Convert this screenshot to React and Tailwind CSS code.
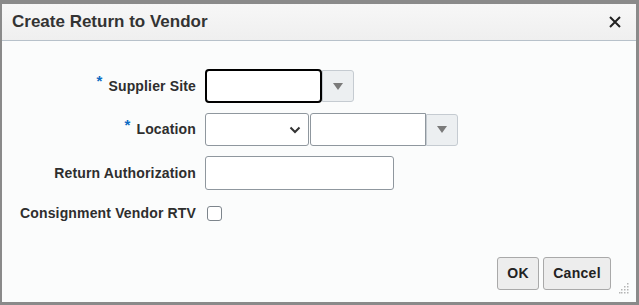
import React from 'react';

const font = { fontFamily: '"Liberation Sans", Arial, sans-serif' };

const Triangle = () => (
    <svg width="10" height="7" viewBox="0 0 10 7">
        <path d="M0 0 L10 0 L5 7 Z" fill="#7a7a7a" />
    </svg>
);

const DropButton = () => (
    <div className="w-[32px] h-[32px] flex items-center justify-center bg-[#eceff1] border border-[#c5cbd1] rounded-r-[3px]">
        <Triangle />
    </div>
);

const Label = ({ required, children }) => (
    <div className="w-[195px] shrink-0 pr-[1px] flex items-center justify-end text-[14px] font-bold tracking-[0.15px] text-[#2e2e2e]">
        {required && <span className="text-[#0b6bc3] text-[15px] mr-[6px] -mt-[9px]">*</span>}
        <span>{children}</span>
    </div>
);

const Grip = () => (
    <svg width="10" height="11" viewBox="0 0 10 11">
        {[[8, 0], [8, 3], [5, 3], [8, 6], [5, 6], [2, 6], [8, 9], [5, 9], [2, 9], [0, 9]].map(([x, y], i) => (
            <rect key={i} x={x} y={y} width="1.5" height="1.5" fill="#b4b4b4" />
        ))}
    </svg>
);

export default function App() {
    return (
        <div style={font} className="w-[639px] h-[305px] border-t-4 border-l-2 border-r-3 border-b-3 border-[#8a8a8a] flex flex-col bg-[#fbfcfc] overflow-hidden">
            {/* Header */}
            <div className="h-[37px] shrink-0 flex items-center justify-between pl-[10px] pr-[15px] bg-gradient-to-b from-[#f7f7f7] to-[#efefef] border-b border-[#b7c1ca]">
                <h1 className="text-[17px] font-bold text-[#333]">Create Return to Vendor</h1>
                <svg width="12" height="12" viewBox="0 0 12 12">
                    <path d="M1 1 L11 11 M11 1 L1 11" stroke="#222" strokeWidth="2" />
                </svg>
            </div>

            {/* Body */}
            <div className="flex-1 flex flex-col pt-[28px] relative">
                <div className="flex flex-col gap-[10px]">
                    <div className="flex items-center gap-[8px] h-[34px]">
                        <Label required>Supplier Site</Label>
                        <div className="flex items-center">
                            <div className="w-[117px] h-[34px] border-2 border-black rounded-[4px] bg-white" />
                            <DropButton />
                        </div>
                    </div>

                    <div className="flex items-center gap-[8px] h-[33px]">
                        <Label required>Location</Label>
                        <div className="flex items-center gap-[1px]">
                            <div className="w-[104px] h-[33px] border border-[#8f979e] rounded-[3px] bg-white flex items-center justify-end pr-[7px]">
                                <svg width="12" height="8" viewBox="0 0 12 8">
                                    <path d="M1.5 1.5 L6 6 L10.5 1.5" stroke="#333" strokeWidth="2" fill="none" />
                                </svg>
                            </div>
                            <div className="flex items-center">
                                <div className="w-[116px] h-[33px] border border-[#8f979e] rounded-l-[3px] bg-white" />
                                <DropButton />
                            </div>
                        </div>
                    </div>

                    <div className="flex items-center gap-[8px] h-[34px]">
                        <Label>Return Authorization</Label>
                        <div className="w-[189px] h-[34px] border border-[#8f979e] rounded-[3px] bg-white" />
                    </div>

                    <div className="flex items-center gap-[10px] h-[26px]">
                        <Label>Consignment Vendor RTV</Label>
                        <div className="w-[15px] h-[15px] border border-[#7d858c] rounded-[3px] bg-white" />
                    </div>
                </div>

                <div className="mt-auto flex justify-end items-end pr-[7px] pb-[8px]">
                    <div className="flex gap-[4px] mb-[4px]">
                        <button className="w-[42px] h-[33px] bg-[#ededed] border border-[#a9a9a9] rounded-[3px] text-[14px] font-bold tracking-[0.3px] text-[#222]">OK</button>
                        <button className="w-[68px] h-[33px] bg-[#ededed] border border-[#a9a9a9] rounded-[3px] text-[14px] font-bold tracking-[0.3px] text-[#222]">Cancel</button>
                    </div>
                    <div className="ml-[8px]">
                        <Grip />
                    </div>
                </div>
            </div>
        </div>
    );
}
